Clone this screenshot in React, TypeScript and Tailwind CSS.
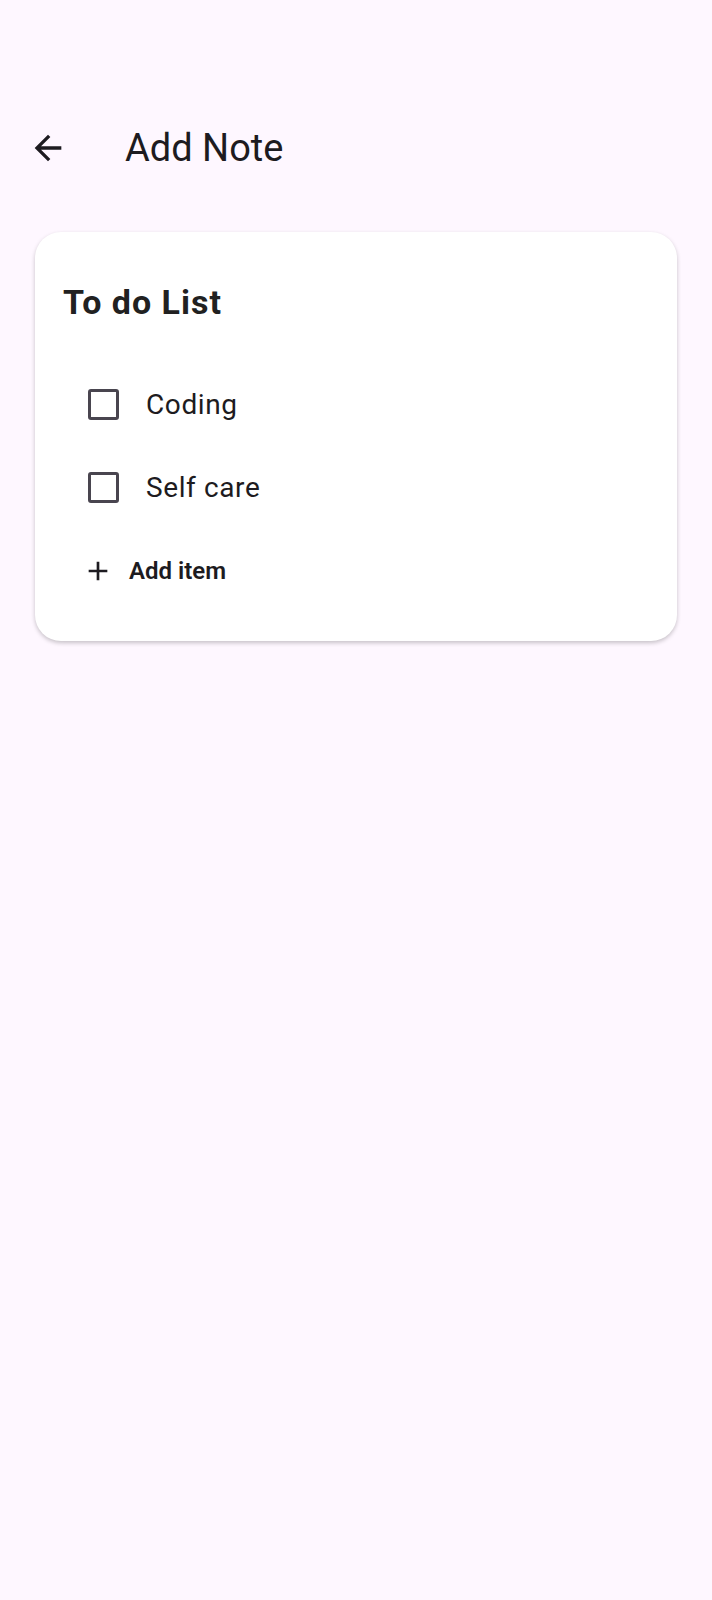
import React from 'react';

const items = ['Coding', 'Self care'];

function BackIcon() {
  return (
    <svg width="40" height="40" viewBox="0 0 24 24" fill="#1d1b20">
      <path d="M20 11H7.83l5.59-5.59L12 4l-8 8 8 8 1.41-1.41L7.83 13H20v-2z" />
    </svg>
  );
}

function AddIcon() {
  return (
    <svg width="32" height="32" viewBox="0 0 24 24" fill="#1d1b20">
      <path d="M19 13h-6v6h-2v-6H5v-2h6V5h2v6h6v2z" />
    </svg>
  );
}

export default function App() {
  return (
    <div className="min-h-[1600px] bg-[#fef7ff] font-['Roboto',sans-serif] text-[#1d1b20]">
      {/* App bar */}
      <div className="pt-[112px] h-[184px]">
        <div className="flex items-center h-[72px] pl-[28px]">
          <BackIcon />
          <span className="ml-[57px] text-[38px] leading-[44px]">Add Note</span>
        </div>
      </div>

      {/* Note card */}
      <div className="mx-[35px] mt-[48px] bg-white rounded-[26px] shadow-[0_2px_4px_rgba(0,0,0,0.22)] pl-[28px] pr-6 pt-[50px] pb-[29px]">
        <h1 className="text-[34px] leading-[40px] font-bold tracking-[1px] text-[#212121]">To do List</h1>
        <div className="mt-[41px]">
          {items.map((item) => (
            <div key={item} className="flex items-center h-[83px] pl-[25px]">
              <div className="w-[31px] h-[31px] border-[3px] border-[#49454f] rounded-[3px]" />
              <span className="ml-[27px] text-[28px] leading-[32px] tracking-[0.6px]">{item}</span>
            </div>
          ))}
          <div className="flex items-center h-[83px] pl-[19px]">
            <AddIcon />
            <span className="ml-[15px] text-[24px] leading-[28px] font-semibold">Add item</span>
          </div>
        </div>
      </div>
    </div>
  );
}
